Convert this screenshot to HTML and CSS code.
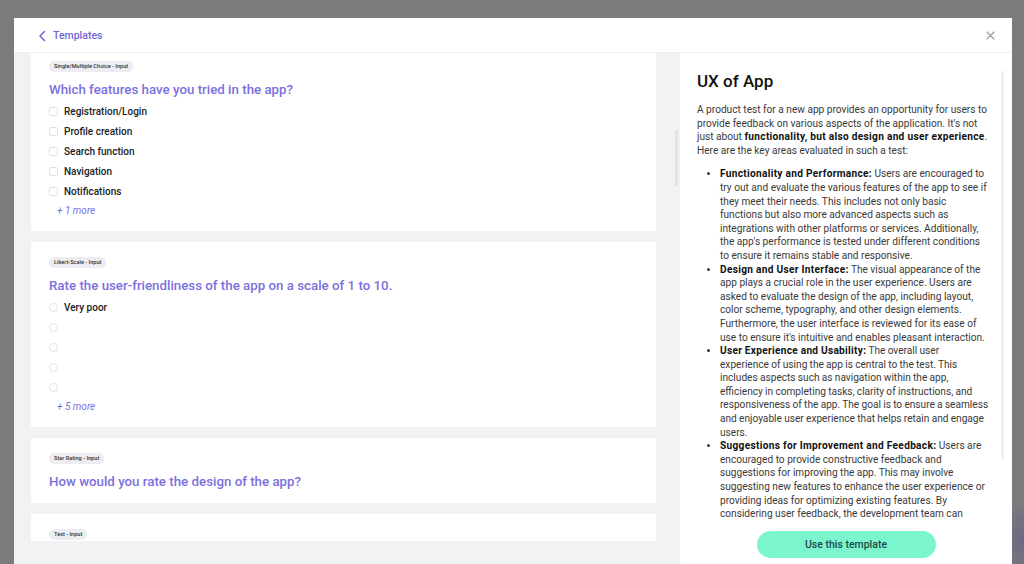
FILE: index.html
```html
<!DOCTYPE html>
<html lang="en">
<head>
    <meta charset="UTF-8">
    <meta name="viewport" content="width=device-width, initial-scale=1.0">
    <title>Templates</title>
    <link rel="stylesheet" href="styles.css">
</head>
<body>
    <div class="modal">
        <header class="modal-header">
            <a class="back-link" href="#">
                <svg width="9" height="12" viewBox="0 0 9 12"><path d="M6.5 1.5 2 6l4.5 4.5" fill="none" stroke="#6f66d8" stroke-width="1.5" stroke-linecap="round" stroke-linejoin="round"/></svg>
                Templates
            </a>
            <button class="close-btn" aria-label="Close">
                <svg width="9" height="9" viewBox="0 0 9 9"><path d="M1 1l7 7M8 1 1 8" stroke="#9a9a9a" stroke-width="1.1" stroke-linecap="round"/></svg>
            </button>
        </header>

        <div class="modal-body">
            <!-- Lista de perguntas -->
            <section class="questions">
                <div class="question-list">
                    <div class="card card-cut">
                        <span class="badge">Single/Multiple Choice - Input</span>
                        <h3 class="question">Which features have you tried in the app?</h3>
                        <ul class="options">
                            <li><span class="box"></span>Registration/Login</li>
                            <li><span class="box"></span>Profile creation</li>
                            <li><span class="box"></span>Search function</li>
                            <li><span class="box"></span>Navigation</li>
                            <li><span class="box"></span>Notifications</li>
                        </ul>
                        <div class="more">+ 1 more</div>
                    </div>

                    <div class="card">
                        <span class="badge">Likert-Scale - Input</span>
                        <h3 class="question">Rate the user-friendliness of the app on a scale of 1 to 10.</h3>
                        <ul class="options">
                            <li><span class="radio"></span>Very poor</li>
                            <li><span class="radio"></span></li>
                            <li><span class="radio"></span></li>
                            <li><span class="radio"></span></li>
                            <li><span class="radio"></span></li>
                        </ul>
                        <div class="more">+ 5 more</div>
                    </div>

                    <div class="card">
                        <span class="badge">Star Rating - Input</span>
                        <h3 class="question">How would you rate the design of the app?</h3>
                    </div>

                    <div class="card">
                        <span class="badge">Text - Input</span>
                        <h3 class="question">What do you like most about the app?</h3>
                    </div>
                </div>
                <div class="scrollbar"><div class="thumb"></div></div>
            </section>

            <!-- Detalhes do template -->
            <aside class="details">
                <div class="details-scroll">
                    <div class="details-text">
                        <h2>UX of App</h2>
                        <p>A product test for a new app provides an opportunity for users to provide feedback on various aspects of the application. It's not just about <strong>functionality, but also design and user experience</strong>. Here are the key areas evaluated in such a test:</p>
                        <ul>
                            <li><strong>Functionality and Performance:</strong> Users are encouraged to try out and evaluate the various features of the app to see if they meet their needs. This includes not only basic functions but also more advanced aspects such as integrations with other platforms or services. Additionally, the app's performance is tested under different conditions to ensure it remains stable and responsive.</li>
                            <li><strong>Design and User Interface:</strong> The visual appearance of the app plays a crucial role in the user experience. Users are asked to evaluate the design of the app, including layout, color scheme, typography, and other design elements. Furthermore, the user interface is reviewed for its ease of use to ensure it's intuitive and enables pleasant interaction.</li>
                            <li class="tight"><strong>User Experience and Usability:</strong> The overall user experience of using the app is central to the test. This includes aspects such as navigation within the app, efficiency in completing tasks, clarity of instructions, and responsiveness of the app. The goal is to ensure a seamless and enjoyable user experience that helps retain and engage users.</li>
                            <li><strong>Suggestions for Improvement and Feedback:</strong> Users are encouraged to provide constructive feedback and suggestions for improving the app. This may involve suggesting new features to enhance the user experience or providing ideas for optimizing existing features. By considering user feedback, the development team can continuously improve the app.</li>
                        </ul>
                    </div>
                    <div class="details-scrollbar"></div>
                </div>
                <div class="details-footer">
                    <button class="use-btn">Use this template</button>
                </div>
            </aside>
        </div>
    </div>
</body>
</html>
```

FILE: styles.css
```css
* {
    box-sizing: border-box;
}

body {
    margin: 0;
    height: 564px;
    overflow: hidden;
    font-family: 'Roboto', sans-serif;
    background: radial-gradient(circle at 1030px 540px, #6a6585 0, #7b7b7b 40px), #7b7b7b;
    padding: 18px 12px 0 14px;
}

.modal {
    background-color: #fff;
    height: 546px;
    display: flex;
    flex-direction: column;
}

.modal-header {
    height: 35px;
    flex-shrink: 0;
    display: flex;
    align-items: center;
    justify-content: space-between;
    padding: 1px 17px 0 24px;
    border-bottom: 1px solid #eeeff0;
}

.back-link {
    display: flex;
    align-items: center;
    gap: 6px;
    color: #6f66d8;
    font-size: 10.5px;
    font-weight: 500;
    text-decoration: none;
}

.close-btn {
    border: none;
    background: none;
    padding: 0;
    display: flex;
    cursor: pointer;
}

.modal-body {
    flex: 1;
    display: flex;
    min-height: 0;
}

/* Coluna esquerda */
.questions {
    width: 666px;
    background-color: #f1f3f3;
    display: flex;
    align-items: flex-start;
    padding: 0 0 0 17px;
}

.question-list {
    width: 625px;
    height: 488px;
    overflow: hidden;
    display: flex;
    flex-direction: column;
    gap: 11px;
}

.scrollbar {
    width: 24px;
    display: flex;
    justify-content: flex-end;
    padding-right: 2px;
}

.thumb {
    width: 3px;
    height: 56px;
    margin-top: 77px;
    background-color: #e2e4e4;
    border-radius: 2px;
}

.card {
    background-color: #fff;
    padding: 15px 18px 10px;
    flex-shrink: 0;
}

.card-cut {
    padding-top: 8px;
}

.badge {
    display: block;
    width: fit-content;
    height: 11px;
    font-size: 5.6px;
    font-weight: 500;
    color: #333;
    background-color: #ececf2;
    border-radius: 6px;
    padding: 0 5px;
    line-height: 11px;
}

.question {
    margin: 9px 0 2px;
    font-size: 13.3px;
    font-weight: 500;
    color: #7b70de;
    line-height: 18px;
}

.options {
    list-style: none;
    margin: 0;
    padding: 0;
}

.options li {
    height: 20px;
    display: flex;
    align-items: center;
    gap: 6px;
    font-size: 10px;
    font-weight: 500;
    color: #222;
}

.box,
.radio {
    width: 9px;
    height: 9px;
    border: 1px solid #e2e2e6;
    border-radius: 2px;
    flex-shrink: 0;
}

.radio {
    border-radius: 50%;
}

.more {
    margin-left: 8px;
    height: 20px;
    line-height: 20px;
    font-size: 10px;
    font-style: italic;
    color: #7b70de;
}

/* Coluna direita */
.details {
    flex: 1;
    display: flex;
    flex-direction: column;
    min-width: 0;
}

.details-scroll {
    display: flex;
    height: 468px;
    overflow: hidden;
    padding: 18px 0 0 17px;
}

.details-text {
    width: 293px;
    color: #3a3a3a;
    font-size: 10.15px;
    line-height: 13.6px;
}

.details-scrollbar {
    width: 3px;
    height: 388px;
    margin-left: 11px;
    background-color: #efefef;
}

.details-text h2 {
    margin: 0 0 12px;
    font-size: 17px;
    font-weight: 500;
    color: #111;
    line-height: 20px;
}

.details-text p {
    margin: 0 0 10px;
}

.details-text strong {
    color: #111;
    font-weight: 700;
    letter-spacing: 0.3px;
}

.details-text ul {
    margin: 0;
    padding-left: 23px;
}

.details-text .tight {
    word-spacing: -0.25px;
}

.details-footer {
    display: flex;
    justify-content: center;
    padding-top: 10px;
}

.use-btn {
    width: 179px;
    height: 27px;
    border: none;
    border-radius: 14px;
    background-color: #7af5cd;
    color: #1e4a48;
    font-family: 'Roboto', sans-serif;
    font-size: 10.5px;
    font-weight: 500;
    cursor: pointer;
}
```
